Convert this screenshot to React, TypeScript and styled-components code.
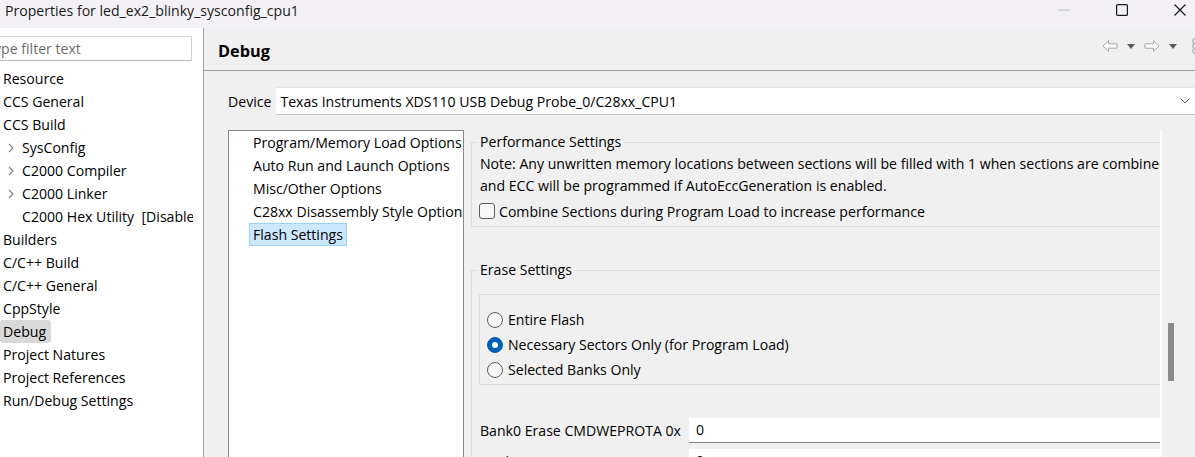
import React from "react";
import styled, { createGlobalStyle } from "styled-components";

const GlobalStyle = createGlobalStyle`
  html, body { margin: 0; padding: 0; }
  body {
    background: #f0f0f0;
    font-family: "Open Sans", "Noto Sans", sans-serif;
    font-size: 14.1px;
    color: #000;
    overflow: hidden;
  }
  * { box-sizing: border-box; }
`;

const Window = styled.div`
  width: 1195px;
  height: 457px;
  display: flex;
  flex-direction: column;
  overflow: hidden;
  background: #f0f0f0;
`;

/* ---------- title bar ---------- */

const TitleBar = styled.div`
  flex: none;
  height: 28px;
  display: flex;
  align-items: flex-start;
  background: #f3f1f6;
`;

const Title = styled.div`
  flex: 1;
  padding: 1px 0 0 5px;
  line-height: 20px;
  color: #1a1a1a;
  white-space: nowrap;
`;

const WinButtons = styled.div`
  display: flex;
  margin-right: -14px;
`;

const WinButton = styled.div`
  width: 58px;
  height: 20px;
  display: flex;
  align-items: center;
  justify-content: center;
`;

/* ---------- body ---------- */

const Body = styled.div`
  flex: 1;
  display: flex;
  min-height: 0;
`;

const LeftPane = styled.div`
  flex: none;
  width: 204px;
  background: #fff;
  border-right: 1px solid #a0a0a0;
`;

const LeftColumn = styled.div`
  width: 193px;
  height: 100%;
  overflow: hidden;
`;

const FilterBox = styled.div`
  margin: 8px 0 0 -16px;
  width: 208px;
  height: 25px;
  padding-left: 4px;
  line-height: 23px;
  color: #6d6d6d;
  background: #fff;
  border: 1px solid #d4d4d4;
  border-bottom-color: #b8b8b8;
  white-space: nowrap;
`;

const Tree = styled.div`
  padding-top: 6px;
`;

const TreeRow = styled.div<{ $depth: number }>`
  height: 23px;
  display: flex;
  align-items: center;
  padding-left: ${(p) => (p.$depth ? 8 : 0)}px;
  white-space: pre;
`;

const Twisty = styled.span`
  width: 11px;
  flex: none;
  display: flex;
  align-items: center;
`;

const TreeLabel = styled.span<{ $selected?: boolean }>`
  line-height: 23px;
  padding: 0 5px 0 3px;
  border-radius: 3px;
  background: ${(p) => (p.$selected ? "#d9d9d9" : "transparent")};
`;

const RightPane = styled.div`
  flex: 1;
  min-width: 0;
  display: flex;
  flex-direction: column;
`;

const Header = styled.div`
  flex: none;
  height: 43px;
  display: flex;
  align-items: flex-start;
  border-bottom: 1px solid #a0a0a0;
`;

const PageTitle = styled.div`
  flex: 1;
  padding: 12px 0 0 14px;
  font-size: 16.3px;
  font-weight: 700;
  line-height: 22px;
`;

const Toolbar = styled.div`
  display: flex;
  align-items: center;
  gap: 9px;
  margin: 12px -4px 0 0;
  height: 12px;
`;

const MenuSlot = styled.span`
  display: flex;
  margin-left: 5px;
`;

const DeviceRow = styled.div`
  flex: none;
  display: flex;
  align-items: center;
  gap: 5px;
  margin-top: 16px;
  padding-left: 24px;
`;

const Combo = styled.div`
  flex: 1;
  height: 28px;
  display: flex;
  align-items: center;
  padding: 0 5px 0 4px;
  background: #fff;
  border-top: 1px solid #e3e3e3;
  border-bottom: 1px solid #c6c6c6;
  white-space: nowrap;
`;

const ComboText = styled.span`
  flex: 1;
`;

const Main = styled.div`
  flex: 1;
  min-height: 0;
  display: flex;
  margin-top: 15px;
  padding-left: 24px;
`;

const OptionList = styled.div`
  flex: none;
  width: 236px;
  background: #fff;
  border: 1px solid #828790;
  border-bottom: none;
  overflow: hidden;
`;

const OptionItem = styled.div`
  height: 23px;
  padding-left: 20px;
  white-space: nowrap;
`;

const OptionLabel = styled.span<{ $selected?: boolean }>`
  display: inline-block;
  height: 23px;
  line-height: 21px;
  padding: 0 3px;
  border: 1px solid ${(p) => (p.$selected ? "#99d1ff" : "transparent")};
  background: ${(p) => (p.$selected ? "#cce8ff" : "transparent")};
`;

const ScrollArea = styled.div`
  flex: 1;
  min-width: 0;
  display: flex;
  margin-left: 7px;
`;

const Content = styled.div`
  flex: 1;
  min-width: 0;
  overflow: hidden;
`;

const ContentInner = styled.div`
  width: 760px;
`;

const ScrollTrack = styled.div`
  flex: none;
  width: 35px;
  border-left: 2px solid #fafafa;
  padding: 193px 0 0 6px;
`;

const ScrollThumb = styled.div`
  width: 6px;
  height: 58px;
  background: #8a8a8a;
`;

const Group = styled.fieldset<{ $gap?: number }>`
  margin: ${(p) => p.$gap ?? 1}px 0 0;
  padding: 0 0 4px 8px;
  border: 1px solid #dcdcdc;
  min-width: 0;
`;

const Legend = styled.legend`
  margin-left: -3px;
  padding: 0 3px;
  line-height: 22px;
`;

const Line = styled.div`
  line-height: 22px;
  white-space: nowrap;
`;

const CheckRow = styled.label`
  display: flex;
  align-items: center;
  gap: 4px;
  height: 22px;
  margin: 3px 0 0 -1px;
  white-space: nowrap;
`;

const CheckBox = styled.span`
  width: 16px;
  height: 16px;
  border: 1px solid #5c5c5c;
  border-radius: 3px;
  background: #f7f7f7;
`;

const RadioBox = styled.div`
  margin: 13px 0 0 -1px;
  padding: 12px 0 2px 7px;
  border: 1px solid #dcdcdc;
`;

const RadioRow = styled.label`
  display: flex;
  align-items: center;
  gap: 5px;
  height: 25px;
  white-space: nowrap;
`;

const RadioDot = styled.span<{ $checked?: boolean }>`
  width: 16px;
  height: 16px;
  border-radius: 50%;
  display: flex;
  align-items: center;
  justify-content: center;
  border: 1px solid ${(p) => (p.$checked ? "#005fb8" : "#5c5c5c")};
  background: ${(p) => (p.$checked ? "#005fb8" : "#f7f7f7")};
  &::after {
    content: "";
    display: ${(p) => (p.$checked ? "block" : "none")};
    width: 6px;
    height: 6px;
    border-radius: 50%;
    background: #fff;
  }
`;

const FieldGrid = styled.div`
  display: grid;
  grid-template-columns: 209px 1fr;
  row-gap: 6px;
  margin-top: 33px;
`;

const FieldLabel = styled.div`
  line-height: 25px;
  white-space: nowrap;
`;

const FieldInput = styled.div`
  height: 25px;
  line-height: 24px;
  padding-left: 7px;
  background: #fff;
  border-bottom: 1.5px solid #848484;
`;

/* ---------- icons ---------- */

const Minimize = () => (
  <svg width="12" height="2" viewBox="0 0 12 2">
    <line x1="0" y1="1" x2="12" y2="1" stroke="#bdbdbd" strokeWidth="1" />
  </svg>
);

const Maximize = () => (
  <svg width="12" height="12" viewBox="0 0 12 12">
    <rect x="0.6" y="0.6" width="10.8" height="10.8" rx="1" fill="none" stroke="#1a1a1a" strokeWidth="1.2" />
  </svg>
);

const Close = () => (
  <svg width="12" height="12" viewBox="0 0 12 12">
    <path d="M0.5 0.5 L11.5 11.5 M11.5 0.5 L0.5 11.5" stroke="#1a1a1a" strokeWidth="1.2" />
  </svg>
);

const NavArrow = ({ flip }: { flip?: boolean }) => (
  <svg width="16" height="12" viewBox="0 0 16 12" style={flip ? { transform: "scaleX(-1)" } : undefined}>
    <path d="M1 6 L6.5 0.8 L6.5 3.8 L15 3.8 L15 8.2 L6.5 8.2 L6.5 11.2 Z" fill="#fafafa" stroke="#a9a9a9" strokeWidth="1" strokeLinejoin="round" />
  </svg>
);

const DropMark = () => (
  <svg width="8" height="5" viewBox="0 0 8 5">
    <path d="M0 0 H8 L4 5 Z" fill="#5a5a5a" />
  </svg>
);

const ViewMenu = () => (
  <svg width="8" height="16" viewBox="0 0 8 16">
    <circle cx="4" cy="3" r="2.3" fill="none" stroke="#9a9a9a" />
    <circle cx="4" cy="8" r="2.3" fill="none" stroke="#9a9a9a" />
    <circle cx="4" cy="13" r="2.3" fill="none" stroke="#9a9a9a" />
  </svg>
);

const Chevron = () => (
  <svg width="6" height="10" viewBox="0 0 6 10">
    <path d="M1 1 L5 5 L1 9" fill="none" stroke="#808080" strokeWidth="1.1" />
  </svg>
);

const ComboChevron = () => (
  <svg width="10" height="6" viewBox="0 0 10 6">
    <path d="M0.5 0.5 L5 5 L9.5 0.5" fill="none" stroke="#606060" strokeWidth="1" />
  </svg>
);

/* ---------- data ---------- */

const treeItems: { label: string; depth: number; twisty?: boolean; selected?: boolean }[] = [
  { label: "Resource", depth: 0 },
  { label: "CCS General", depth: 0 },
  { label: "CCS Build", depth: 0 },
  { label: "SysConfig", depth: 1, twisty: true },
  { label: "C2000 Compiler", depth: 1, twisty: true },
  { label: "C2000 Linker", depth: 1, twisty: true },
  { label: "C2000 Hex Utility  [Disabled]", depth: 1 },
  { label: "Builders", depth: 0 },
  { label: "C/C++ Build", depth: 0 },
  { label: "C/C++ General", depth: 0 },
  { label: "CppStyle", depth: 0 },
  { label: "Debug", depth: 0, selected: true },
  { label: "Project Natures", depth: 0 },
  { label: "Project References", depth: 0 },
  { label: "Run/Debug Settings", depth: 0 },
];

const debugPages = [
  "Program/Memory Load Options",
  "Auto Run and Launch Options",
  "Misc/Other Options",
  "C28xx Disassembly Style Options",
  "Flash Settings",
];

const eraseModes = [
  { label: "Entire Flash" },
  { label: "Necessary Sectors Only (for Program Load)", checked: true },
  { label: "Selected Banks Only" },
];

const bankFields = [
  { label: "Bank0 Erase CMDWEPROTA 0x", value: "0" },
  { label: "Bank0 Erase CMDWEPROTB 0x", value: "0" },
];

export default function App() {
  return (
    <>
      <GlobalStyle />
      <Window>
        <TitleBar>
          <Title>Properties for led_ex2_blinky_sysconfig_cpu1</Title>
          <WinButtons>
            <WinButton><Minimize /></WinButton>
            <WinButton><Maximize /></WinButton>
            <WinButton><Close /></WinButton>
          </WinButtons>
        </TitleBar>

        <Body>
          <LeftPane>
            <LeftColumn>
              <FilterBox>type filter text</FilterBox>
              <Tree>
                {treeItems.map((t) => (
                  <TreeRow key={t.label} $depth={t.depth}>
                    {t.depth > 0 && <Twisty>{t.twisty && <Chevron />}</Twisty>}
                    <TreeLabel $selected={t.selected}>{t.label}</TreeLabel>
                  </TreeRow>
                ))}
              </Tree>
            </LeftColumn>
          </LeftPane>

          <RightPane>
            <Header>
              <PageTitle>Debug</PageTitle>
              <Toolbar>
                <NavArrow />
                <DropMark />
                <NavArrow flip />
                <DropMark />
                <MenuSlot><ViewMenu /></MenuSlot>
              </Toolbar>
            </Header>

            <DeviceRow>
              <span>Device</span>
              <Combo>
                <ComboText>Texas Instruments XDS110 USB Debug Probe_0/C28xx_CPU1</ComboText>
                <ComboChevron />
              </Combo>
            </DeviceRow>

            <Main>
              <OptionList>
                {debugPages.map((p) => (
                  <OptionItem key={p}>
                    <OptionLabel $selected={p === "Flash Settings"}>{p}</OptionLabel>
                  </OptionItem>
                ))}
              </OptionList>

              <ScrollArea>
                <Content>
                  <ContentInner>
                    <Group>
                      <Legend>Performance Settings</Legend>
                      <Line>Note: Any unwritten memory locations between sections will be filled with 1 when sections are combined</Line>
                      <Line>and ECC will be programmed if AutoEccGeneration is enabled.</Line>
                      <CheckRow>
                        <CheckBox />
                        Combine Sections during Program Load to increase performance
                      </CheckRow>
                    </Group>

                    <Group $gap={32}>
                      <Legend>Erase Settings</Legend>
                      <RadioBox>
                        {eraseModes.map((m) => (
                          <RadioRow key={m.label}>
                            <RadioDot $checked={m.checked} />
                            {m.label}
                          </RadioRow>
                        ))}
                      </RadioBox>
                      <FieldGrid>
                        {bankFields.map((f) => (
                          <React.Fragment key={f.label}>
                            <FieldLabel>{f.label}</FieldLabel>
                            <FieldInput>{f.value}</FieldInput>
                          </React.Fragment>
                        ))}
                      </FieldGrid>
                    </Group>
                  </ContentInner>
                </Content>
                <ScrollTrack>
                  <ScrollThumb />
                </ScrollTrack>
              </ScrollArea>
            </Main>
          </RightPane>
        </Body>
      </Window>
    </>
  );
}
